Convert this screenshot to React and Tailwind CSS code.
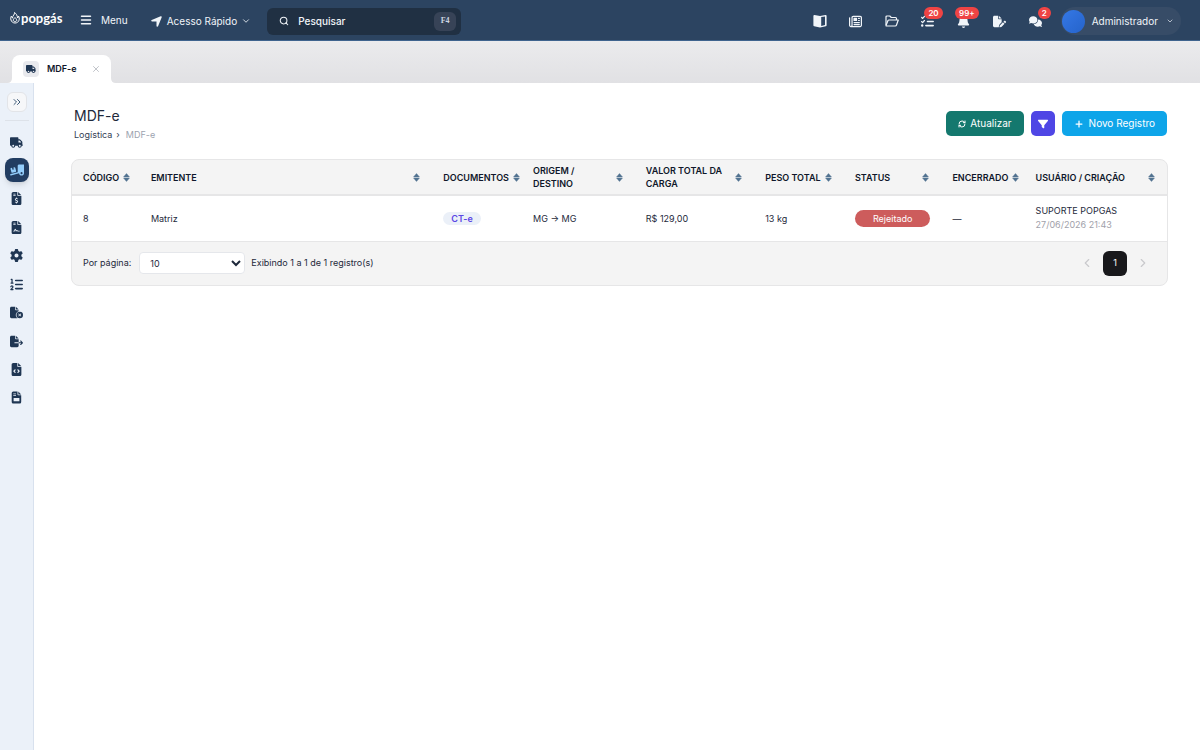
import React from "react";
import {
  FaTruck, FaTruckRampBox, FaFileInvoiceDollar, FaFileContract, FaGear, FaListOl,
  FaFileCircleXmark, FaFileExport, FaFileCode, FaBars, FaLocationArrow,
  FaListCheck, FaBell, FaFilePen, FaComments, FaFilter, FaRegNewspaper,
} from "react-icons/fa6";
import {
  ChevronDown, ChevronLeft, ChevronRight, ChevronsRight, Plus, RefreshCw, Search, X,
} from "lucide-react";

function BookIcon() {
  return (
    <svg viewBox="0 0 14 13" className="size-3.5" fill="currentColor" aria-hidden="true">
      <path d="M1.500 0.500 7 1.600V13L1.200 11.700A1 1 0 0 1 .4 10.700V1.500A1 1 0 0 1 1.500.500Z" />
      <path fillRule="evenodd" d="M7 1.600 12.400.500A1 1 0 0 1 13.600 1.500V10.700A1 1 0 0 1 12.800 11.700L7 13ZM8.200 2.600V11.500L12 10.600V1.900Z" />
    </svg>
  );
}

function FolderIcon() {
  return (
    <svg viewBox="0 0 14 12" className="size-3.5" fill="none" stroke="currentColor" strokeWidth="1.2" strokeLinejoin="round" aria-hidden="true">
      <path d="M1 10V2Q1 1 2 1H4.800L6.300 2.500H10.500Q11.500 2.500 11.500 3.500V5" />
      <path d="M1 10.500 3 5.600Q3.200 5 4 5H13.300L11.500 10Q11.200 11 10.200 11H1.500Q.8 11 1 10.500Z" />
    </svg>
  );
}

function FileBoxIcon({ className }) {
  return (
    <svg viewBox="0 0 13 13" className={className} fill="currentColor" aria-hidden="true">
      <path fillRule="evenodd" d="M3.200.500H7.500V3.200Q7.500 4.200 8.500 4.200H11.200V11Q11.200 12.500 9.700 12.500H3.200Q1.700 12.500 1.700 11V2Q1.700.500 3.200.500ZM3.300 2.400V3.200H6V2.400ZM3.300 4.300V5.100H6V4.300ZM3.600 7V10.200H9.400V7Z" />
      <path d="M8.300.500 11.200 3.400H8.300Z" />
    </svg>
  );
}

function SortIcon() {
  return (
    <svg viewBox="0 0 7 9" className="h-[9px] w-[7px] shrink-0 text-[#527391]" fill="currentColor" stroke="currentColor" strokeWidth=".5" strokeLinejoin="round" aria-hidden="true">
      <path d="M3.500.600 6.400 3.900H.6ZM3.500 8.400.6 5.100H6.400Z" />
    </svg>
  );
}

function Logo() {
  return (
    <a href="#" aria-label="popgás" className="mb-1.5 flex h-4 w-[52px] shrink-0 items-center gap-px text-white">
      <svg viewBox="0 0 20 24" className="h-3 w-2.5 shrink-0" fill="none" stroke="currentColor" strokeWidth="2" aria-hidden="true">
        <path d="M9 1C10 5 5 7 5 12c-2-1-2-3-2-4C0 11 1 22 10 22S20 12 17 8c0 2-1 3-2 4C15 7 12 3 9 1Z" />
        <path d="M10 11c-6 6-3 8 0 8s6-2 0-8Z" />
      </svg>
      <span className="font-[Lato,sans-serif] text-[13px] leading-4 font-bold">popgás</span>
    </a>
  );
}

const actions = [
  { label: "Manual", icon: BookIcon },
  { label: "Notícias", icon: FaRegNewspaper },
  { label: "Arquivos", icon: FolderIcon },
  { label: "Tarefas", icon: FaListCheck, badge: "20" },
  { label: "Notificações", icon: FaBell, badge: "99+" },
  { label: "Assinaturas", icon: FaFilePen },
  { label: "Mensagens", icon: FaComments, badge: "2" },
];

const sideItems = [
  { label: "Transporte", icon: FaTruck },
  { label: "MDF-e", icon: FaTruckRampBox, active: true },
  { label: "Faturas", icon: FaFileInvoiceDollar },
  { label: "Contratos", icon: FaFileContract },
  { label: "Configurações", icon: FaGear },
  { label: "Numeração", icon: FaListOl },
  { label: "Inutilização", icon: FaFileCircleXmark },
  { label: "Exportar", icon: FaFileExport },
  { label: "XML", icon: FaFileCode },
  { label: "Notas", icon: FileBoxIcon },
];

const columns = [
  { label: "Código", width: "w-[6.2%]" },
  { label: "Emitente", width: "w-[26.7%]" },
  { label: "Documentos", width: "w-[8.2%]" },
  { label: "Origem / Destino", width: "w-[10.3%]" },
  { label: "Valor total da carga", width: "w-[10.9%]" },
  { label: "Peso total", width: "w-[8.2%]" },
  { label: "Status", width: "w-[8.9%]" },
  { label: "Encerrado", width: "w-[7.6%]" },
  { label: "Usuário / Criação", width: "w-[13%]" },
];

function TopBar() {
  return (
    <header className="flex h-[41px] items-center border-b border-[#3f648e] bg-[#2c4461] pt-0.5 pr-[19px] pl-2.5 text-[10px] text-[#f1f5f9]">
      <Logo />
      <button type="button" className="mb-0.5 ml-[18px] flex items-center gap-[9px]">
        <FaBars className="size-3" />Menu
      </button>
      <button type="button" className="ml-[22px] flex items-center gap-1">
        <FaLocationArrow className="size-[13px]" />Acesso Rápido<ChevronDown className="size-2.5" />
      </button>
      <label className="ml-4 flex h-[27px] w-[194px] items-center rounded-md bg-[#203043] pr-[5px] pl-3">
        <Search className="size-2.5 shrink-0" strokeWidth={2.5} />
        <input type="text" aria-label="Pesquisar" placeholder="Pesquisar" className="ml-[9px] min-w-0 flex-1 bg-transparent text-[10px] font-medium outline-none placeholder:text-[#f1f5f9]" />
        <kbd className="flex h-[19px] w-[22px] items-center justify-center rounded-md bg-[#374357] font-['Liberation_Serif',serif] text-[8px] font-bold text-[#cbd5e1]">F4</kbd>
      </label>
      <nav className="ml-auto flex items-center gap-2.5" aria-label="Ações">
        {actions.map(({ label, icon: Icon, badge }) => (
          <button key={label} type="button" aria-label={label} className="relative flex size-[26px] items-center justify-center">
            <Icon className="size-[13px]" />
            {badge && (
              <span className="absolute -top-px -right-0.5 flex h-3 min-w-3 items-center justify-center rounded-full bg-[#ef4444] px-1 text-[8px] font-semibold text-white">{badge}</span>
            )}
          </button>
        ))}
      </nav>
      <button type="button" className="ml-3 flex h-7 items-center rounded-full bg-[#374c67] pr-[7px] pl-px">
        <span className="size-[23px] rounded-full bg-linear-to-br from-[#3578e5] to-[#2563cb]" />
        <span className="mr-2 ml-[7px]">Administrador</span>
        <ChevronDown className="size-2" />
      </button>
    </header>
  );
}

function TabBar() {
  return (
    <div className="flex h-[42px] items-end bg-linear-to-b from-[#ebebed] to-[#e1e1e4] pl-3">
      <div className="relative flex h-7 w-[99px] items-center rounded-t-lg bg-white pr-2.5 pl-[11px]">
        <svg viewBox="0 0 5 5" className="absolute bottom-0 -left-[5px] size-[5px] text-white" aria-hidden="true"><path d="M5 0V5H0Q5 5 5 0Z" fill="currentColor" /></svg>
        <svg viewBox="0 0 5 5" className="absolute -right-[5px] bottom-0 size-[5px] text-white" aria-hidden="true"><path d="M0 0V5H5Q0 5 0 0Z" fill="currentColor" /></svg>
        <span className="flex size-4 items-center justify-center rounded bg-[#e8e9ed]"><FaTruck className="size-2.5 text-[#1f3653]" /></span>
        <span className="ml-2 text-[9px] font-semibold text-[#0f172a]">MDF-e</span>
        <button type="button" aria-label="Fechar aba" className="ml-auto"><X className="size-2.5 text-[#b4b8bf]" /></button>
      </div>
    </div>
  );
}

function SideBar() {
  return (
    <aside className="flex w-[34px] shrink-0 flex-col items-center border-r border-[#d8e1ee] bg-[#ebf1f9] pt-[9px]">
      <button type="button" aria-label="Expandir" className="flex size-5 items-center justify-center rounded-md border border-[#e2e4e8] bg-[#f6f7f9]">
        <ChevronsRight className="size-3 text-[#3f5b78]" />
      </button>
      <div className="mt-2 h-px w-6 bg-[#dde2e9]" />
      <nav className="mt-[9px] flex h-[280px] flex-col justify-between" aria-label="Módulos">
        {sideItems.map(({ label, icon: Icon, active }) => (
          <a key={label} href="#" aria-label={label} className={active ? "flex size-6 items-center justify-center rounded-lg bg-[#223d62] text-[#93cdfb] shadow-md" : "flex size-6 items-center justify-center text-[#1f3653]"}>
            <Icon className={active ? "size-3.5" : "size-[13px]"} />
          </a>
        ))}
      </nav>
    </aside>
  );
}

function DataTable() {
  return (
    <section className="mt-[18px] overflow-hidden rounded-lg border border-[#e6e6e7] bg-[#f4f4f4] text-[9px] text-[#1e293b]">
      <table className="w-full table-fixed border-collapse text-left">
        <thead>
          <tr className="h-[35px] border-b-2 border-[#e6e6e7]">
            {columns.map(({ label, width }) => (
              <th key={label} scope="col" className={`${width} py-0 pr-3 pl-[11px] text-[#0f172a]`}>
                <button type="button" className="flex w-full items-center justify-between gap-1 text-left text-[9px] leading-[13px] font-semibold uppercase">
                  {label}<SortIcon />
                </button>
              </th>
            ))}
          </tr>
        </thead>
        <tbody>
          <tr className="h-[46px] border-b border-[#e6e6e7] bg-white">
            <td className="px-[11px]">8</td>
            <td className="px-[11px]">Matriz</td>
            <td className="px-[11px]"><span className="inline-block rounded-full bg-[#ebf0f8] px-2 leading-[13px] font-semibold text-[#5b46e5]">CT-e</span></td>
            <td className="px-[11px]">MG → MG</td>
            <td className="px-[11px]">R$ 129,00</td>
            <td className="px-[11px]">13 kg</td>
            <td className="px-[11px]"><span className="block rounded-full bg-[#cd5c5c] text-center leading-[17px] text-white">Rejeitado</span></td>
            <td className="px-[11px]">—</td>
            <td className="px-[11px] leading-[14px]">SUPORTE POPGAS<br /><span className="text-[#a1a1aa]">27/06/2026 21:43</span></td>
          </tr>
        </tbody>
      </table>
      <div className="flex h-[43px] items-center pr-4 pl-[11px]">
        <label htmlFor="per-page">Por página:</label>
        <select id="per-page" defaultValue="10" className="mr-1.5 ml-2 h-[22px] w-[106px] rounded border border-[#e5e7eb] bg-white pl-1.5 text-[9px]">
          <option>10</option>
          <option>25</option>
          <option>50</option>
        </select>
        <span>Exibindo 1 a 1 de 1 registro(s)</span>
        <nav className="ml-auto flex items-center gap-2" aria-label="Paginação">
          <button type="button" aria-label="Página anterior" disabled className="flex size-4 items-center justify-center text-[#c9c9cc]"><ChevronLeft className="size-3.5" /></button>
          <button type="button" aria-current="page" className="h-[25px] w-6 rounded-md bg-[#18181b] text-white">1</button>
          <button type="button" aria-label="Próxima página" disabled className="flex size-4 items-center justify-center text-[#c9c9cc]"><ChevronRight className="size-3.5" /></button>
        </nav>
      </div>
    </section>
  );
}

export default function App() {
  return (
    <div className="flex min-h-screen flex-col bg-white font-[Inter,sans-serif]">
      <TopBar />
      <TabBar />
      <div className="flex flex-1">
        <SideBar />
        <main className="min-w-0 flex-1 pt-[23px] pr-8 pl-[37px]">
          <div className="flex items-start justify-between pr-px pl-[3px]">
            <div>
              <h1 className="text-[14px] leading-5 text-[#1e293b]">MDF-e</h1>
              <nav aria-label="Trilha" className="mt-[3px] flex gap-1 text-[9px] leading-3 text-[#334155]">
                <a href="#">Logística</a><span>›</span><span className="ml-0.5 text-[#9ca3af]">MDF-e</span>
              </nav>
            </div>
            <div className="flex gap-[7px] pt-[5px] text-[10px] text-white">
              <button type="button" className="flex h-[25px] items-center gap-1 rounded-[5px] bg-[#14786e] px-3"><RefreshCw className="size-2" strokeWidth={3} />Atualizar</button>
              <button type="button" aria-label="Filtrar" className="flex h-[25px] w-6 items-center justify-center rounded-[5px] bg-[#4f46e5]"><FaFilter className="size-2.5" /></button>
              <button type="button" className="flex h-[25px] items-center gap-[5px] rounded-[5px] bg-[#0ea5e9] px-3"><Plus className="size-2.5" strokeWidth={3} />Novo Registro</button>
            </div>
          </div>
          <DataTable />
        </main>
      </div>
    </div>
  );
}
